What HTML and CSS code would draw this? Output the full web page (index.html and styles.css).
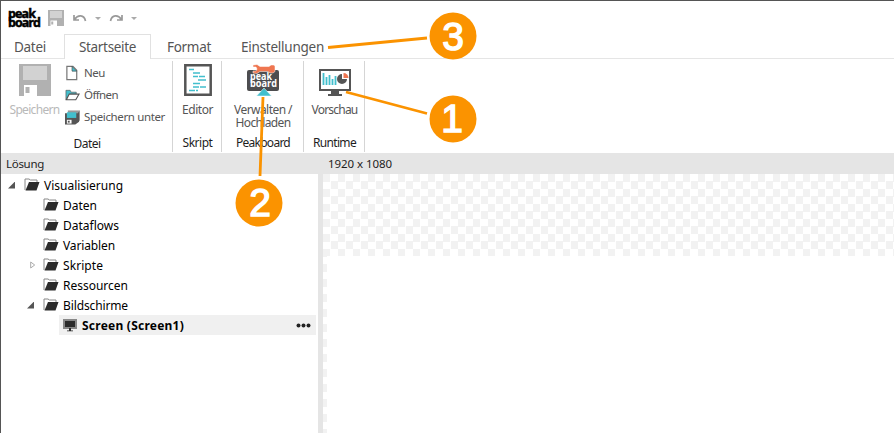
FILE: index.html
```
<!DOCTYPE html>
<html lang="de">
<head>
<meta charset="utf-8">
<title>Peakboard Designer</title>
<link rel="stylesheet" href="styles.css">
</head>
<body>
<svg class="defs" width="0" height="0">
  <symbol id="disk" viewBox="0 0 32 32"><path fill="#b1b1b1" d="M0 0h32v32H0z"/><path fill="#d2d2d2" d="M4 2h24v14H4z"/><path fill="#fff" d="M5 21h13v11H5z"/><path fill="#b1b1b1" d="M6.500 23h4v6h-4z"/></symbol>
  <symbol id="folder" viewBox="0 0 16 13"><path fill="#fff" stroke="#888" d="M1 12V1h4l1.500 1H13v3"/><path fill="#2b2b2b" d="M5 4h10.500L12.500 12.500H1.500z"/></symbol>
  <symbol id="undo" viewBox="0 0 14 8"><path d="M1 1v5h5M1.500 5.500C5 .5 11 .5 12.500 7" fill="none" stroke="#999" stroke-width="1.700"/></symbol>
</svg>
<div class="window">
  <header class="quick">
    <div class="logo"><span>peak</span><span>board</span></div>
    <svg class="save-small"><use href="#disk"/></svg>
    <svg class="undo"><use href="#undo"/></svg><i class="drop"></i>
    <svg class="undo redo"><use href="#undo"/></svg><i class="drop"></i>
  </header>
  <nav class="tabs">
    <span class="tab file"><b>Datei</b></span><span class="tab active"><b>Startseite</b></span><span class="tab format"><b>Format</b></span><span class="tab settings"><b>Einstellungen</b></span>
  </nav>
  <section class="ribbon">
    <div class="group g-file">
      <div class="tools">
        <div class="tool disabled"><svg class="big"><use href="#disk"/></svg><span class="t-save">Speichern</span></div>
        <div class="list">
          <div class="row"><svg viewBox="0 0 16 16"><path fill="#fff" stroke="#777" stroke-width="1.300" d="M2 1h6.500L12.500 5v10H2z"/><path fill="#42bfcd" stroke="#444" stroke-width=".7" d="M7.500 1v5h5z"/></svg><span class="t-new">Neu</span></div>
          <div class="row"><svg viewBox="0 0 16 16"><path fill="#42bfcd" stroke="#555" stroke-width=".7" d="M1 13V3h4.500l1 2H12v2H5z"/><path fill="#fff" stroke="#555" stroke-width="1.200" d="M4.500 7H15l-3.500 6H1.500z"/></svg><span class="t-open">Öffnen</span></div>
          <div class="row"><svg viewBox="0 0 16 16"><path fill="#999" d="M3 1h13v11H3z"/><path fill="#555" d="M0 4h14V3h1v10l-4 3H0z"/><path fill="#42bfcd" d="M2 3h10v6H2z"/><path fill="#fff" d="M2 11h5v4H2z"/><path fill="#555" d="M3 12h2v2H3z"/></svg><span class="t-as">Speichern unter</span></div>
        </div>
      </div>
      <div class="caption"><span class="c-file">Datei</span></div>
    </div>
    <div class="group g-script">
      <div class="tool"><svg class="big" viewBox="0 0 32 32"><path fill="#fff" stroke="#555" stroke-width="2.500" d="M3.300 1.300h25.400v29.400H3.300z"/><path fill="none" stroke="#42bfcd" stroke-width="1.500" d="M7 5.500h5M11 9h7M11 12.500h5M17 12.500h6M16 16h8M11 19.500h7M11 23h6M18 23h6M7 26.500h6M14 26.500h2"/></svg><span class="t-editor">Editor</span></div>
      <div class="caption"><span class="c-script">Skript</span></div>
    </div>
    <div class="group g-peak">
      <div class="tool"><svg class="big" viewBox="0 0 32 32"><rect x="0" y="6" width="32" height="21" rx="2" fill="#4d4d4f"/><path fill="#ef7650" stroke="#fff" stroke-width=".5" d="M6 1l4-.5 3 2h9l2-1.500h3l1 1.500v5L26 9h-3l-2-1.500h-8L10 9.500 6 9V7h3l1-2-1-2H6z"/><text x="3" y="15.500" textLength="22" lengthAdjust="spacingAndGlyphs" class="mini">peak</text><text x="3" y="22.500" textLength="27" lengthAdjust="spacingAndGlyphs" class="mini">board</text><path fill="#42bfcd" stroke="#fff" stroke-width=".5" d="M17 24l7.500 8h-15z"/></svg><span class="t-manage">Verwalten /</span><span class="t-upload">Hochladen</span></div>
      <div class="caption"><span class="c-peak">Peakboard</span></div>
    </div>
    <div class="group g-run">
      <div class="tool"><svg class="big" viewBox="0 0 32 32"><path fill="#fff" stroke="#555" stroke-width="2" d="M1 6h30v20H1z"/><path fill="#555" d="M12 27h8v3h3v2H9v-2h3z"/><path stroke="#42bfcd" stroke-width="1.800" d="M4.500 9v12M7.500 13v8M10.500 11v10M13.500 15v6M16.500 12v9"/><path fill="#555" d="M23 10v5h5a5 5 0 1 1-5-5z"/><path fill="#ef7650" d="M24.500 9a5 5 0 0 1 5 5h-5z"/></svg><span class="t-preview">Vorschau</span></div>
      <div class="caption"><span class="c-run">Runtime</span></div>
    </div>
  </section>
  <main class="work">
    <aside class="side">
      <div class="head"><span class="t-solution">Lösung</span></div>
      <div class="tree">
        <div class="node root"><i class="arrow open"></i><svg><use href="#folder"/></svg><span class="n0">Visualisierung</span></div>
        <div class="node"><i class="arrow"></i><svg><use href="#folder"/></svg><span class="n1">Daten</span></div>
        <div class="node"><i class="arrow"></i><svg><use href="#folder"/></svg><span class="n2">Dataflows</span></div>
        <div class="node"><i class="arrow"></i><svg><use href="#folder"/></svg><span class="n3">Variablen</span></div>
        <div class="node"><svg class="closed" viewBox="0 0 6 8"><path fill="#fff" stroke="#aaa" d="M.7 1l4 3-4 3z"/></svg><svg><use href="#folder"/></svg><span class="n4">Skripte</span></div>
        <div class="node"><i class="arrow"></i><svg><use href="#folder"/></svg><span class="n5">Ressourcen</span></div>
        <div class="node"><i class="arrow open"></i><svg><use href="#folder"/></svg><span class="n6">Bildschirme</span></div>
        <div class="node selected"><svg class="screen" viewBox="0 0 14 13"><path fill="#888" d="M0 0h14v10H0zM4 11h6v1.500H4z"/><path fill="#2b2b2b" d="M2 2h10v6H2zM6 9h2v3H6z"/></svg><span class="n7">Screen (Screen1)</span><svg class="more" viewBox="0 0 15 5"><circle cx="2.500" cy="2.500" r="2"/><circle cx="7.500" cy="2.500" r="2"/><circle cx="12.500" cy="2.500" r="2"/></svg></div>
      </div>
    </aside>
    <section class="stage">
      <div class="head"><span class="t-size">1920 x 1080</span></div>
      <div class="canvas"><div class="page"></div></div>
    </section>
  </main>
</div>
<svg class="callouts" viewBox="0 0 894 433">
  <g stroke="#fb9300" stroke-width="2.800"><path d="M328 47.500L427 38M346 92l81 21.500M263 97l-3 79"/></g>
  <g fill="#fb9300"><circle cx="453" cy="36" r="23.500"/><circle cx="453" cy="119" r="23.500"/><circle cx="259" cy="203" r="23.500"/></g>
  <text x="453" y="50">3</text><text x="452" y="132">1</text><text x="260" y="216">2</text>
</svg>
<script src="fit.js"></script>
</body>
</html>
```
FILE: fit.js
```
// Tunes the tracking of each label so it keeps its design width.
document.querySelectorAll("span, .tab b").forEach(function (el) {
  var target = parseFloat(getComputedStyle(el).getPropertyValue("--w"));
  if (!target || el.classList.contains("tab")) return;
  el.style.letterSpacing = "0px";
  var range = document.createRange();
  range.selectNodeContents(el);
  var width = range.getBoundingClientRect().width;
  el.style.letterSpacing = (target - width) / el.textContent.length + "px";
});
```
FILE: styles.css
```
* { box-sizing: border-box; }
body { margin: 0; width: 894px; height: 433px; overflow: hidden; background: #fff; font: 12px/20px "Noto Sans", "Open Sans", sans-serif; color: #1e1e1e; }
svg { flex: none; display: block; }
.defs { position: absolute; }
span, b { white-space: nowrap; }
.window { height: 433px; border-top: 1px solid #555; border-left: 1px solid #555; display: flex; flex-direction: column; }
.quick { height: 33px; display: flex; align-items: center; padding: 1px 0 0 7px; }
.logo { flex: none; width: 32px; height: 18px; display: flex; flex-direction: column; font: 700 12.5px/10px "Open Sans", sans-serif; color: #000; -webkit-text-stroke: .5px #000; }
.logo span { --w: 32; height: 9px; }
.logo span:first-child { --w: 27; }
.save-small { width: 16px; height: 16px; margin: 0 9px 0 8px; }
.undo { width: 14px; height: 8px; }
.drop { border: 3px solid transparent; border-top-color: #aaa; border-bottom: 0; margin: 0 7px 0 8px; }
.redo { transform: scaleX(-1); margin-left: 1px; }
.tabs { flex: none; height: 25px; display: flex; border-bottom: 1px solid #e5e5e5; font-size: 13.5px; color: #555; }
.tab { height: 25px; line-height: 26px; }
.tab b { font-weight: 400; }
.file { width: 63px; padding-left: 13px; }
.file b { --w: 32; }
.active { width: 87px; border: 1px solid #e1e1e1; border-bottom: 0; background: #fff; padding-left: 14px; line-height: 25px; }
.active b { --w: 57; }
.format { width: 75px; padding-left: 16px; }
.format b { --w: 44; }
.settings { padding-left: 15px; }
.settings b { --w: 83; }
.ribbon { height: 94px; display: flex; padding-top: 2px; }
.group { height: 91px; border-right: 1px solid #d5d5d5; display: flex; flex-direction: column; }
.g-file { width: 172px; }
.g-script { width: 49px; }
.g-peak { width: 82px; }
.g-run { width: 61px; }
.tools { display: flex; }
.tool { display: flex; flex-direction: column; align-items: center; padding: 3px 0 0 1px; color: #555; height: 72px; line-height: 13px; }
.disabled { width: 50px; margin-left: 8px; color: #b9b9b9; }
.big { width: 32px; height: 32px; margin-bottom: 7px; }
.list { padding: 1px 0 0 6px; color: #555; }
.row { height: 22px; display: flex; align-items: center; gap: 4px; font-size: 11.5px; }
.row svg { width: 15px; height: 16px; }
.caption { text-align: center; line-height: 18px; margin-top: 2px; padding-left: 1px; }
.mini { font: 700 10px "Open Sans", sans-serif; fill: #fff; }
.t-save { --w: 50; }
.t-new { --w: 21; }
.t-open { --w: 34; }
.t-as { --w: 81; }
.t-editor { --w: 31; }
.t-manage { --w: 58; }
.t-upload { --w: 55; }
.t-preview { --w: 46; }
.c-file { --w: 27; }
.c-script { --w: 30; }
.c-peak { --w: 54; }
.c-run { --w: 43; }
.work { flex: 1; display: flex; min-height: 0; }
.side { width: 322px; border-right: 5px solid #e5e5e5; }
.head { height: 21px; background: #e5e5e5; line-height: 22px; padding-left: 5px; font-size: 11.5px; }
.t-solution { --w: 38; }
.t-size { --w: 64; }
.tree { padding: 1px 2px 0 0; }
.node { height: 20px; line-height: 22px; display: flex; align-items: center; padding-left: 26px; color: #000; }
.node span { padding-top: 2px; }
.root { padding-left: 7px; }
.node svg { width: 16px; height: 13px; margin: 0 4px 2px -1px; }
.arrow { width: 17px; height: 7px; flex: none; }
.open { background: #555; clip-path: polygon(7px 0, 7px 7px, 0 7px); }
.node .closed { width: 6px; height: 8px; margin: 0 8px 0 3px; }
.n0 { --w: 79; } .n1 { --w: 34; } .n2 { --w: 56; } .n3 { --w: 52; } .n4 { --w: 40; } .n5 { --w: 65; } .n6 { --w: 65; }
.n7 { --w: 102; }
.selected { margin-left: 58px; padding-left: 4px; background: #f0f0f0; font-weight: 700; }
.node .screen { width: 14px; height: 13px; margin: 0 5px 0 0; }
.node .more { width: 15px; height: 5px; margin: 0 5px 0 auto; fill: #222; }
.stage { flex: 1; display: flex; flex-direction: column; }
.stage .head { flex: none; }
.canvas { flex: 1; padding: 82px 0 0 4px; background: repeating-conic-gradient(#fff 0 25%, #f2f2f2 0 50%) 0 0 / 15px 15px; }
.page { height: 100%; background: #fff; }
.callouts { position: absolute; left: 0; top: 0; width: 894px; height: 433px; pointer-events: none; }
.callouts text { font: 400 39px "Liberation Sans", sans-serif; fill: #fff; stroke: #fff; stroke-width: 1.4px; text-anchor: middle; }
```
